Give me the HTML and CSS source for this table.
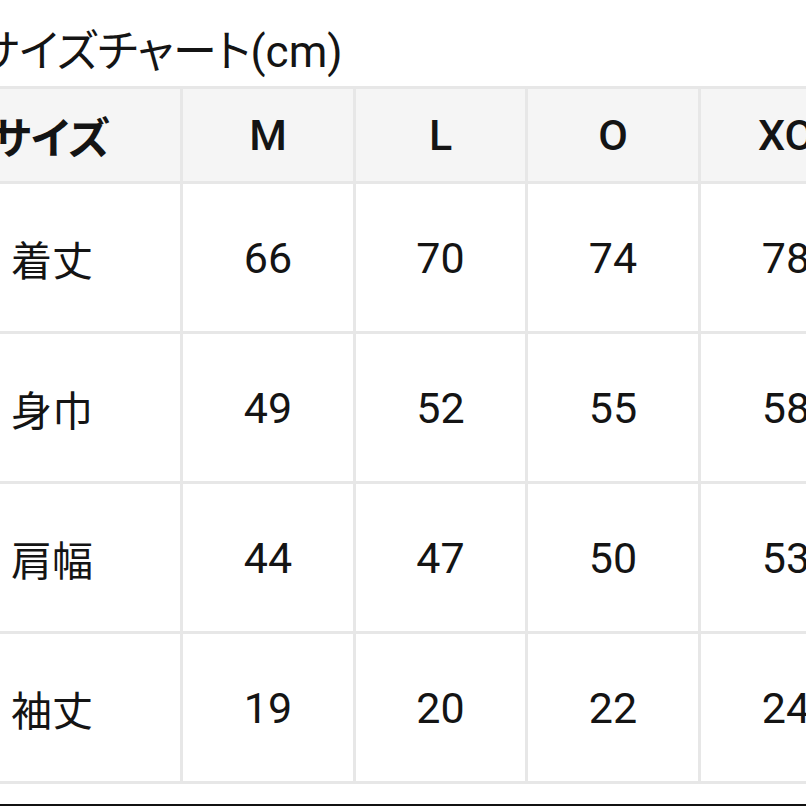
FILE: index.html
```html
<!DOCTYPE html>
<html lang="ja">
<head>
<meta charset="utf-8">
<link rel="stylesheet" href="styles.css">
</head>
<body>
<div class="page">
  <div class="title">サイズチャート(cm)</div>
  <div class="chart">
    <div class="cell head label">サイズ</div>
    <div class="cell head">M</div>
    <div class="cell head">L</div>
    <div class="cell head">O</div>
    <div class="cell head">XO</div>

    <div class="cell label">着丈</div>
    <div class="cell">66</div>
    <div class="cell">70</div>
    <div class="cell">74</div>
    <div class="cell">78</div>

    <div class="cell label">身巾</div>
    <div class="cell">49</div>
    <div class="cell">52</div>
    <div class="cell">55</div>
    <div class="cell">58</div>

    <div class="cell label">肩幅</div>
    <div class="cell">44</div>
    <div class="cell">47</div>
    <div class="cell">50</div>
    <div class="cell">53</div>

    <div class="cell label">袖丈</div>
    <div class="cell">19</div>
    <div class="cell">20</div>
    <div class="cell">22</div>
    <div class="cell">24</div>
  </div>
  <div class="rule"></div>
</div>
</body>
</html>
```
FILE: styles.css
```css
html, body {
  margin: 0;
  padding: 0;
  background: #ffffff;
}
body {
  font-family: Roboto, "Noto Sans CJK JP", sans-serif;
  font-feature-settings: "palt";
  color: #141414;
}
.page {
  width: 806px;
  height: 806px;
  overflow: hidden;
}
.title {
  height: 86px;
  box-sizing: border-box;
  padding-top: 23px;
  margin-left: -22px;
  font-size: 44px;
  line-height: 58px;
  white-space: nowrap;
}
.chart {
  display: grid;
  grid-template-columns: 204px 173px 172px 173px 173px;
  grid-template-rows: 95px 150px 150px 150px 150px;
  width: 895px;
  margin-left: -21px;
  border-top: 3px solid #e7e7e7;
}
.cell {
  box-sizing: border-box;
  border-right: 3px solid #e7e7e7;
  border-bottom: 3px solid #e7e7e7;
  display: flex;
  align-items: center;
  justify-content: center;
  font-size: 43px;
  white-space: nowrap;
}
.head {
  background: #f5f5f5;
  font-weight: 500;
}
.label {
  justify-content: flex-start;
  padding-left: 32px;
  font-size: 41px;
}
.head.label {
  padding-left: 11px;
  font-size: 43px;
  font-weight: 700;
}
.rule {
  margin-top: 20px;
  height: 2px;
  background: #111111;
}
```
